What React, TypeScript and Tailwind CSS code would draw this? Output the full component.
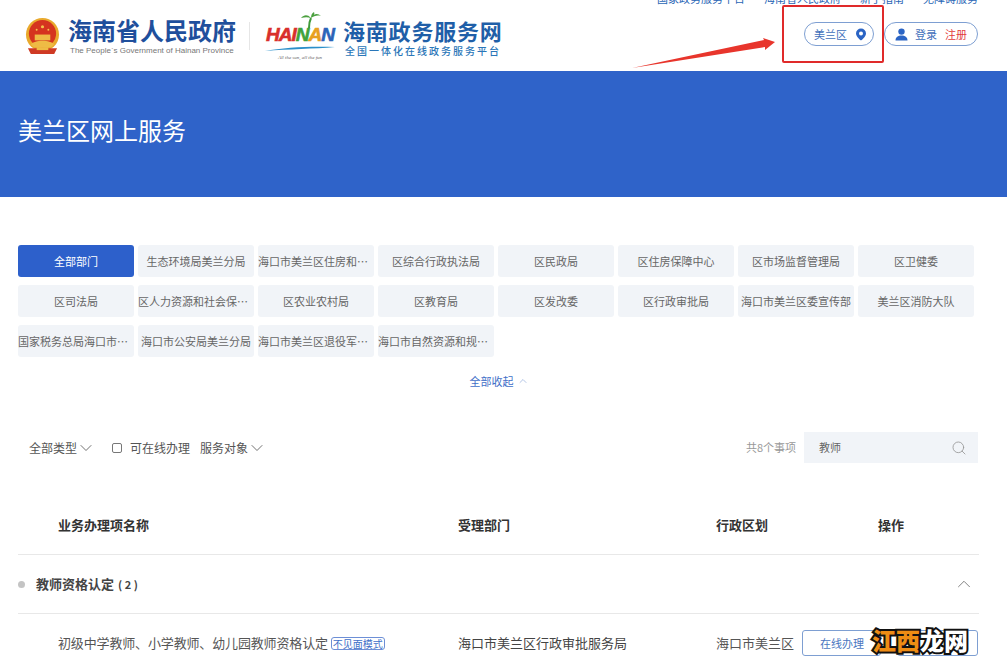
import React from "react";
import { ChevronDown, ChevronUp, Search } from "lucide-react";

const departments = [
  "全部部门", "生态环境局美兰分局", "海口市美兰区住房和城乡建设局", "区综合行政执法局", "区民政局", "区住房保障中心", "区市场监督管理局", "区卫健委",
  "区司法局", "区人力资源和社会保障局", "区农业农村局", "区教育局", "区发改委", "区行政审批局", "海口市美兰区委宣传部", "美兰区消防大队",
  "国家税务总局海口市美兰区税务局", "海口市公安局美兰分局", "海口市美兰区退役军人事务局", "海口市自然资源和规划局",
];

const Emblem = () => (
  <svg width="35" height="37" viewBox="0 0 36 38" className="shrink-0">
    <circle cx="18" cy="17" r="17" fill="#e9a92c" />
    <circle cx="18" cy="16" r="14" fill="#d5341f" />
    <path d="M6 27c4-5 20-5 24 0l-3 3H9z" fill="#eebb45" />
    <rect x="10" y="17" width="16" height="6" fill="#eebb45" />
    <path d="M3 31h30l-3 6H6z" fill="#cf3a24" />
    <rect x="12" y="30" width="12" height="3" fill="#eebb45" />
    <circle cx="18" cy="9" r="1.6" fill="#f3c34c" />
    <circle cx="12" cy="12" r="1" fill="#f3c34c" />
    <circle cx="24" cy="12" r="1" fill="#f3c34c" />
  </svg>
);

const HainanLogo = () => (
  <div className="w-[72px] h-[50px] flex flex-col items-center relative shrink-0">
    <svg width="24" height="18" viewBox="0 0 24 18" className="absolute left-[34px] top-0">
      <path d="M11 17c0-5 1-8 2-10" stroke="#3f9b3a" strokeWidth="2" fill="none" />
      <path d="M13 7C9 3 6 4 3 7c4-1 7-1 10 0zM13 7c3-5 7-5 10-2-4-1-7 0-10 2zM13 7c0-3 1-5 3-6 1 2 0 4-3 6z" fill="#4ba03f" />
    </svg>
    <div className="mt-[13px] h-[22px] flex items-end text-[19px] leading-[22px] font-black italic tracking-[-1px] [-webkit-text-stroke:0.6px_currentColor] font-['Liberation_Sans',sans-serif]">
      <span className="text-[#d92f2b]">HAI</span>
      <span className="text-[#3fa23c]">N</span>
      <span className="text-[#e8a020]">A</span>
      <span className="text-[#2b63b8]">N</span>
    </div>
    <svg width="72" height="6" viewBox="0 0 72 6" className="block">
      <path d="M1 5C20 1 50 0 71 1 50 3 25 3 1 5z" fill="#2a8fc9" />
    </svg>
    <div className="text-[5px] leading-[7px] mt-[2px] text-[#666] italic font-['Liberation_Serif',serif]">All the sun, all the fun</div>
  </div>
);

const Header = () => (
  <header className="h-[71px] flex justify-between overflow-hidden bg-white">
    <div className="flex items-center pl-[25px] pt-[1px]">
      <Emblem />
      <div className="ml-[8px] w-[172px]">
        <div className="text-[24px] leading-[30px] font-bold text-[#1f4f9c] -mt-[1px]">海南省人民政府</div>
        <div className="text-[8px] leading-[12px] ml-[2px] whitespace-nowrap text-[#777] font-['Liberation_Sans',sans-serif]">The People`s Government of Hainan Province</div>
      </div>
      <div className="w-px h-[28px] bg-[#e6e6e6] ml-[9px] mr-[14px]" />
      <HainanLogo />
      <div className="ml-[7px]">
        <div className="text-[22px] leading-[28px] font-bold text-[#1f5fa8] tracking-[0.8px]">海南政务服务网</div>
        <div className="text-[10px] leading-[13px] ml-[2px] font-medium text-[#2a76b8] tracking-[2px]">全国一体化在线政务服务平台</div>
      </div>
    </div>
    <div className="flex flex-col items-end pr-[29px]">
      <div className="h-[14px] -mt-[9px] flex gap-[19px] text-[11px] leading-[14px] text-[#2a66b5]">
        <span>国家政务服务平台</span>
        <span>海南省人民政府</span>
        <span>新手指南</span>
        <span>无障碍服务</span>
      </div>
      <div className="mt-[17px] flex gap-[10px] text-[11px] text-[#3f6fbb]">
        <div className="w-[70px] h-[24px] rounded-full border border-[#7e9fd2] flex items-center pl-[9px]">
          <span>美兰区</span>
          <svg width="12" height="13" viewBox="0 0 12 13" className="ml-[8px]">
            <path d="M6 .5a5 5 0 0 0-5 5C1 9 6 12.5 6 12.5S11 9 11 5.5a5 5 0 0 0-5-5z" fill="#2b64c4" />
            <circle cx="6" cy="5.5" r="2" fill="#fff" />
          </svg>
        </div>
        <div className="w-[94px] h-[24px] rounded-full border border-[#7e9fd2] flex items-center pl-[10px]">
          <svg width="13" height="13" viewBox="0 0 13 13">
            <circle cx="6.5" cy="3.6" r="3.2" fill="#2b64c4" />
            <path d="M.5 12.5c0-3.5 2.5-5 6-5s6 1.5 6 5z" fill="#2b64c4" />
          </svg>
          <span className="ml-[7px]">登录</span>
          <span className="ml-[8px] text-[#e23a3a]">注册</span>
        </div>
      </div>
    </div>
  </header>
);

const DepartmentGrid = () => (
  <div className="grid grid-cols-[repeat(8,116px)] gap-x-[4px] gap-y-[8px]">
    {departments.map((name, i) => (
      <div
        key={name}
        className={
          i === 0
            ? "h-[32px] rounded-[3px] bg-[#2d60cb] text-white text-[11px] leading-[32px] text-center"
            : "h-[32px] rounded-[3px] bg-[#f1f4f8] text-[#666] text-[11px] leading-[32px] text-center truncate"
        }
      >
        {name}
      </div>
    ))}
  </div>
);

const Filters = () => (
  <div className="mt-[43px] h-[31px] flex items-center text-[12px] text-[#555]">
    <span className="ml-[11px]">全部类型</span>
    <ChevronDown className="w-[20px] h-[20px] -mx-[1px] text-[#555]" strokeWidth={1} />
    <span className="w-[10px] h-[10px] ml-[17px] rounded-[2px] border border-[#777]" />
    <span className="ml-[8px]">可在线办理</span>
    <span className="ml-[10px]">服务对象</span>
    <ChevronDown className="w-[20px] h-[20px] -mx-[1px] text-[#555]" strokeWidth={1} />
    <span className="ml-auto text-[11px] text-[#999]">共8个事项</span>
    <div className="w-[174px] h-[31px] ml-[8px] mr-[1px] bg-[#f1f4f8] flex items-center justify-between pl-[15px] pr-[11px] text-[11px] text-[#666]">
      <span>教师</span>
      <Search className="w-[16px] h-[16px] text-[#999]" strokeWidth={1.3} />
    </div>
  </div>
);

const Table = () => (
  <div className="mt-[47px]">
    <div className="h-[45px] flex text-[13px] font-bold text-[#333] border-b border-[#e8e8e8] pb-[16px] leading-[29px]">
      <div className="w-[440px] pl-[40px]">业务办理项名称</div>
      <div className="w-[258px]">受理部门</div>
      <div className="w-[162px]">行政区划</div>
      <div>操作</div>
    </div>
    <div className="h-[59px] flex items-center border-b border-[#e8e8e8]">
      <span className="w-[7px] h-[7px] rounded-full bg-[#c4c4c4]" />
      <span className="ml-[11px] text-[13px] font-bold text-[#444]">教师资格认定</span>
      <span className="ml-[4px] text-[11px] font-bold text-[#444]">( 2 )</span>
      <ChevronUp className="w-[22px] h-[22px] ml-auto mr-[4px] text-[#777]" strokeWidth={1} />
    </div>
    <div className="h-[58px] flex items-center text-[13px] text-[#555]">
      <div className="w-[440px] pl-[40px] flex items-center">
        <span className="tracking-[-0.15px]">初级中学教师、小学教师、幼儿园教师资格认定</span>
        <span className="ml-[3px] h-[13px] px-px rounded-[3px] border border-[#6d8fd6] text-[10px] leading-[11px] text-[#3f6fc8]">不见面模式</span>
      </div>
      <div className="w-[258px] text-[#444]">海口市美兰区行政审批服务局</div>
      <div className="w-[86px] text-[#555]">海口市美兰区</div>
      <div className="w-[79px] h-[26px] rounded-[3px] border border-[#7e9fd2] text-[11px] text-[#4a76c0] leading-[24px] pl-[17px]">在线办理</div>
      <div className="w-[81px] h-[26px] ml-[16px] rounded-[3px] border border-[#7e9fd2]" />
    </div>
  </div>
);

export default function App() {
  return (
    <div className="relative w-[1007px] h-[671px] overflow-hidden bg-white font-['Noto_Sans_CJK_SC','Liberation_Sans',sans-serif]">
      <Header />
      <section className="h-[126px] bg-[#2f63c9] pl-[18px] pt-[41px] text-[24px] leading-[36px] text-white">美兰区网上服务</section>
      <main className="px-[18px] w-[997px] pt-[48px]">
        <DepartmentGrid />
        <div className="mt-[16px] h-[16px] flex items-center justify-center text-[11px] text-[#3f6fc8] pl-[1px]">
          全部收起
          <ChevronUp className="w-[12px] h-[12px] ml-[3px] text-[#8aa5d8]" strokeWidth={1.3} />
        </div>
        <Filters />
        <Table />
      </main>
      {/* annotation drawn on top of the page */}
      <div className="absolute left-[782px] top-[5px] w-[102px] h-[58px] border-2 border-[#e02a2a] rounded-[2px]" />
      <svg width="160" height="40" viewBox="0 0 160 40" className="absolute left-[630px] top-[33px]">
        <polygon points="2,35 134,7 133,5 145,9 135,17 135,14" fill="#e8352c" />
      </svg>
      {/* site watermark */}
      <div className="absolute left-[872px] top-[622px] text-[24px] leading-[36px] font-black tracking-[0px] [-webkit-text-stroke:4px_#111] [paint-order:stroke_fill]">
        <span className="text-[#ee8c14]">江西</span>
        <span className="text-white">龙网</span>
      </div>
    </div>
  );
}
